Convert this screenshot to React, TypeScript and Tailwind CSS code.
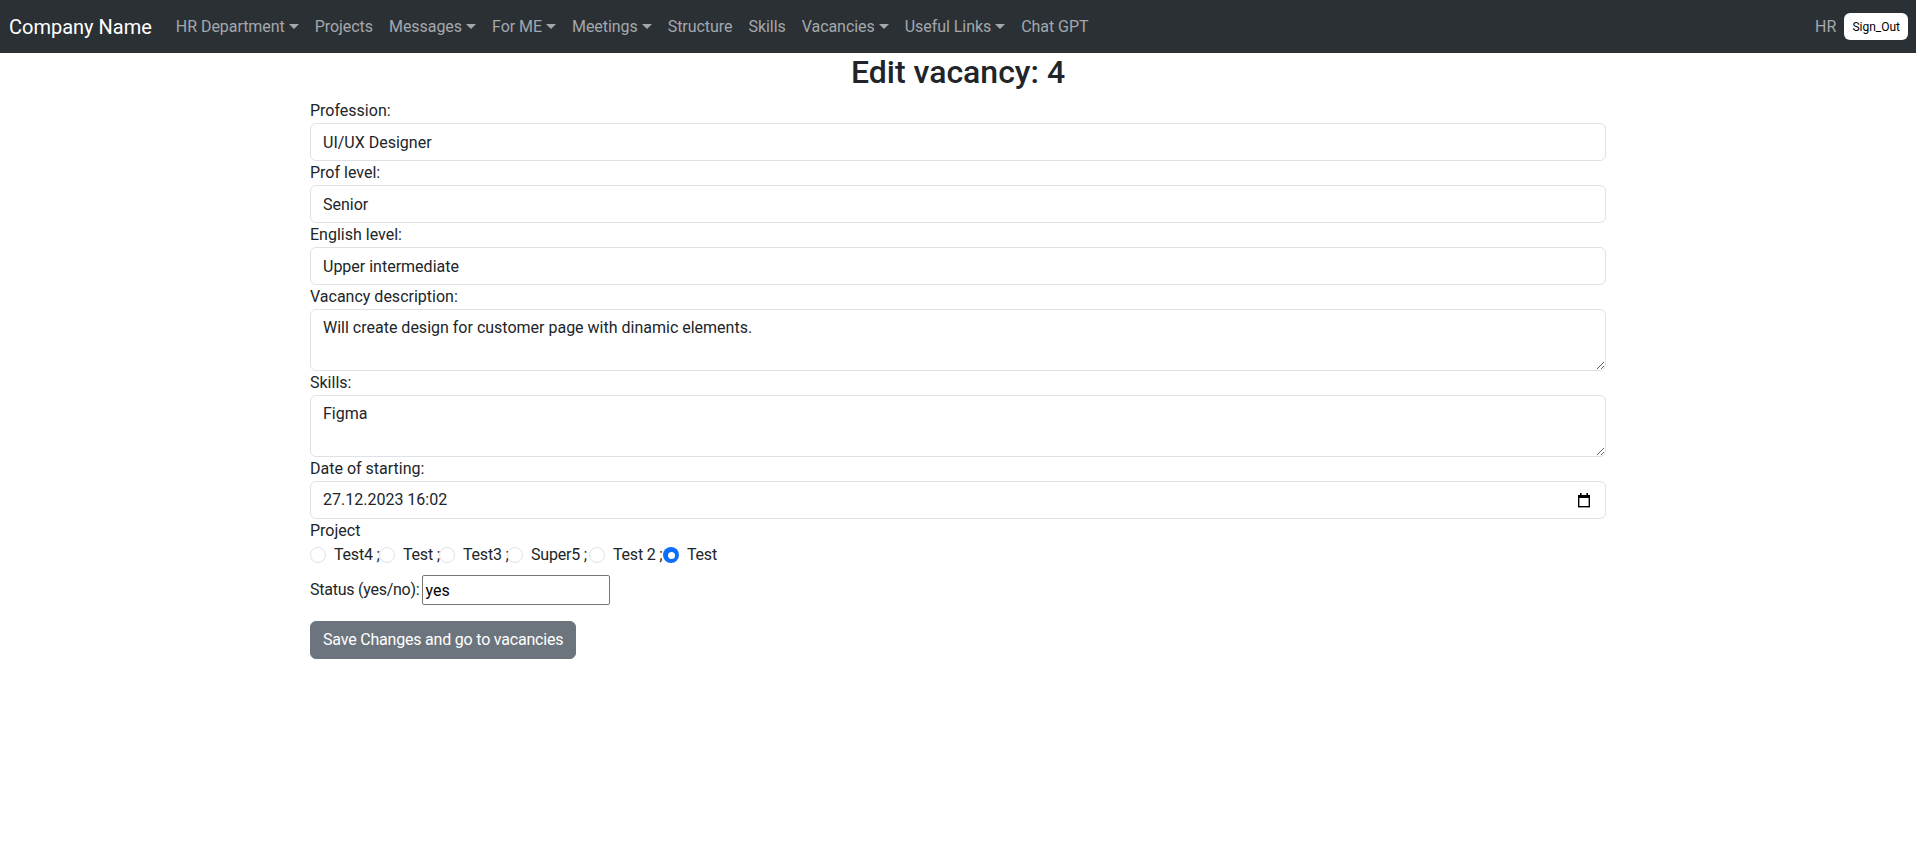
import React from "react";

const navItems = [
  { label: "HR Department", drop: true },
  { label: "Projects", drop: false },
  { label: "Messages", drop: true },
  { label: "For ME", drop: true },
  { label: "Meetings", drop: true },
  { label: "Structure", drop: false },
  { label: "Skills", drop: false },
  { label: "Vacancies", drop: true },
  { label: "Useful Links", drop: true },
  { label: "Chat GPT", drop: false },
];

// label widths measured from the reference so the radios line up
const projects = [
  { name: "Test4 ;", w: "w-[45px]" },
  { name: "Test ;", w: "w-[36px]" },
  { name: "Test3 ;", w: "w-[44px]" },
  { name: "Super5 ;", w: "w-[58px]" },
  { name: "Test 2 ;", w: "w-[50px]" },
  { name: "Test", w: "" },
];

function Caret() {
  return (
    <span className="ml-[4px] inline-block w-0 h-0 border-t-[5px] border-t-current border-x-[5px] border-x-transparent align-middle" />
  );
}

function Field({ label, value }: { label: string; value: string }) {
  return (
    <div>
      <label className="block leading-6">{label}</label>
      <input
        readOnly
        value={value}
        className="w-full h-[38px] px-3 py-1.5 border border-[#dee2e6] rounded-[6px] text-[#212529] leading-6 outline-none bg-white"
      />
    </div>
  );
}

function Area({ label, value }: { label: string; value: string }) {
  return (
    <div>
      <label className="block leading-6">{label}</label>
      <textarea
        readOnly
        rows={2}
        value={value}
        className="block w-full h-[62px] px-3 py-1.5 border border-[#dee2e6] rounded-[6px] text-[#212529] leading-6 outline-none resize-y bg-white"
      />
    </div>
  );
}

function CalendarIcon() {
  return (
    <svg width="14" height="15" viewBox="0 0 14 15" className="text-black">
      <rect x="3" y="0" width="1.6" height="3" fill="currentColor" />
      <rect x="9.4" y="0" width="1.6" height="3" fill="currentColor" />
      <rect x="1" y="2" width="12" height="3" fill="currentColor" />
      <rect x="1.7" y="2.7" width="10.6" height="11" fill="none" stroke="currentColor" strokeWidth="1.4" />
    </svg>
  );
}

export default function App() {
  return (
    <div className="min-h-screen bg-white text-[#212529] text-base font-['Roboto',sans-serif]">
      {/* Navbar */}
      <nav className="h-[53px] bg-[#2b3035] flex items-center justify-between pl-[9px] pr-[8px]">
        <div className="flex items-center">
          <span className="text-white text-[20px] mr-4">Company Name</span>
          <ul className="flex items-center">
            {navItems.map((n, i) => (
              <li key={i} className="px-2 text-[#a3a8ad] flex items-center tracking-[-0.05px]">
                {n.label}
                {n.drop && <Caret />}
              </li>
            ))}
          </ul>
        </div>
        <div className="flex items-center gap-2">
          <span className="text-[#a3a8ad]">HR</span>
          <button className="h-[27px] px-[8px] bg-white rounded-[6px] text-black text-[12px]">Sign_Out</button>
        </div>
      </nav>

      <div className="max-w-[1320px] mx-auto px-3">
        <h1 className="text-center text-[32px] font-medium leading-[1.2] mb-2">Edit vacancy: 4</h1>

        <Field label="Profession:" value="UI/UX Designer" />
        <Field label="Prof level:" value="Senior" />
        <Field label="English level:" value="Upper intermediate" />
        <Area label="Vacancy description:" value="Will create design for customer page with dinamic elements." />
        <Area label="Skills:" value="Figma" />

        <div>
          <label className="block leading-6">Date of starting:</label>
          <div className="w-full h-[38px] px-3 border border-[#dee2e6] rounded-[6px] flex items-center justify-between">
            <span className="leading-6">27.12.2023 16:02</span>
            <span className="mr-[2px] mt-[1px]">
              <CalendarIcon />
            </span>
          </div>
        </div>

        <div className="leading-6">Project</div>
        <div className="flex items-center h-6">
          {projects.map((p, i) => (
            <span key={i} className="flex items-center">
              {i === projects.length - 1 ? (
                <span className="shrink-0 w-4 h-4 rounded-full bg-[#0d6efd] flex items-center justify-center">
                  <span className="w-[7px] h-[7px] rounded-full bg-white" />
                </span>
              ) : (
                <span className="shrink-0 w-4 h-4 rounded-full border border-[#dee2e6] bg-white" />
              )}
              <span className={`ml-2 min-w-0 shrink-0 whitespace-nowrap tracking-[-0.2px] ${p.w}`}>{p.name}</span>
            </span>
          ))}
        </div>

        <div className="mt-2 flex items-center">
          <span className="tracking-[-0.25px]">Status (yes/no):</span>
          <input
            readOnly
            value="yes"
            className="ml-[3px] w-[188px] h-[30px] px-[2px] border border-[#767676] rounded-[2px] text-black outline-none"
          />
        </div>

        <button className="mt-4 h-[38px] px-3 bg-[#6c757d] border border-[#6c757d] rounded-[6px] text-white tracking-[-0.2px]">
          Save Changes and go to vacancies
        </button>
      </div>
    </div>
  );
}
